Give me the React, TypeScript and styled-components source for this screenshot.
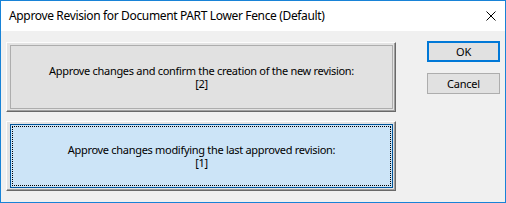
import React from "react";
import styled, { createGlobalStyle } from "styled-components";

const GlobalStyle = createGlobalStyle`
  html, body {
    margin: 0;
    padding: 0;
    background: #f0f0f0;
  }
  body {
    font-family: "Noto Sans", "DejaVu Sans", sans-serif;
    font-size: 12px;
    color: #000;
  }
`;

const Window = styled.div`
  width: 506px;
  height: 203px;
  box-sizing: border-box;
  border: 1px solid #1883d7;
  display: flex;
  flex-direction: column;
  background: #f0f0f0;
`;

const TitleBar = styled.div`
  height: 30px;
  flex: none;
  background: #fff;
  display: flex;
  align-items: center;
  justify-content: space-between;
  padding: 0 9px 0 8px;
`;

const Title = styled.span`
  font-size: 12px;
  letter-spacing: -0.35px;
  line-height: 16px;
  white-space: nowrap;
`;

const CloseIcon = styled.svg`
  width: 10px;
  height: 10px;
  display: block;
`;

const Body = styled.div`
  flex: 1;
  display: flex;
  gap: 31px;
  padding: 11px 0 0 5px;
`;

const Choices = styled.div`
  width: 390px;
  display: flex;
  flex-direction: column;
  gap: 9px;
`;

const ChoiceFrame = styled.div`
  height: 70px;
  box-sizing: border-box;
  border: 1px solid;
  border-color: #fcfcfc #696969 #696969 #fcfcfc;
  box-shadow: inset -1px -1px 0 #a0a0a0;
  background: #e3e3e3;
  padding: 2px 2px 2px 3px;
  display: flex;
`;

const ChoiceFace = styled.div<{ $selected?: boolean }>`
  flex: 1;
  box-sizing: border-box;
  border: 1px solid ${(p) => (p.$selected ? "#005499" : "#adadad")};
  background: ${(p) => (p.$selected ? "#cce4f7" : "#e1e1e1")};
  padding: 1px;
  display: flex;
`;

const FocusRing = styled.div<{ $show?: boolean }>`
  flex: 1;
  border: 1px dotted ${(p) => (p.$show ? "#000" : "transparent")};
  display: flex;
  align-items: center;
  justify-content: center;
`;

const ChoiceLabel = styled.span`
  text-align: center;
  white-space: pre-line;
  font-size: 11px;
  letter-spacing: -0.3px;
  line-height: 13px;
`;

const Actions = styled.div`
  width: 73px;
  display: flex;
  flex-direction: column;
  gap: 11px;
  margin-top: -1px;
`;

const ActionButton = styled.button<{ $default?: boolean }>`
  height: 21px;
  box-sizing: border-box;
  margin: 0;
  padding: 0;
  font: inherit;
  font-size: 11px;
  letter-spacing: -0.2px;
  color: #000;
  background: #e1e1e1;
  border: ${(p) => (p.$default ? "2px solid #0078d7" : "1px solid #adadad")};
  display: flex;
  align-items: center;
  justify-content: center;
`;

const choices = [
  { text: "Approve changes and confirm the creation of the new revision:", rev: "[2]", selected: false },
  { text: "Approve changes modifying the last approved revision:", rev: "[1]", selected: true },
];

export default function App() {
  return (
    <>
      <GlobalStyle />
      <Window>
        <TitleBar>
          <Title>Approve Revision for Document PART Lower Fence (Default)</Title>
          <CloseIcon viewBox="0 0 10 10">
            <path d="M0.5 0.5 L9.5 9.5 M9.5 0.5 L0.5 9.5" stroke="#000" strokeWidth="1" fill="none" />
          </CloseIcon>
        </TitleBar>
        <Body>
          <Choices>
            {choices.map((c) => (
              <ChoiceFrame key={c.rev}>
                <ChoiceFace $selected={c.selected}>
                  <FocusRing $show={c.selected}>
                    <ChoiceLabel>{`${c.text}\n${c.rev}`}</ChoiceLabel>
                  </FocusRing>
                </ChoiceFace>
              </ChoiceFrame>
            ))}
          </Choices>
          <Actions>
            <ActionButton $default>OK</ActionButton>
            <ActionButton>Cancel</ActionButton>
          </Actions>
        </Body>
      </Window>
    </>
  );
}
